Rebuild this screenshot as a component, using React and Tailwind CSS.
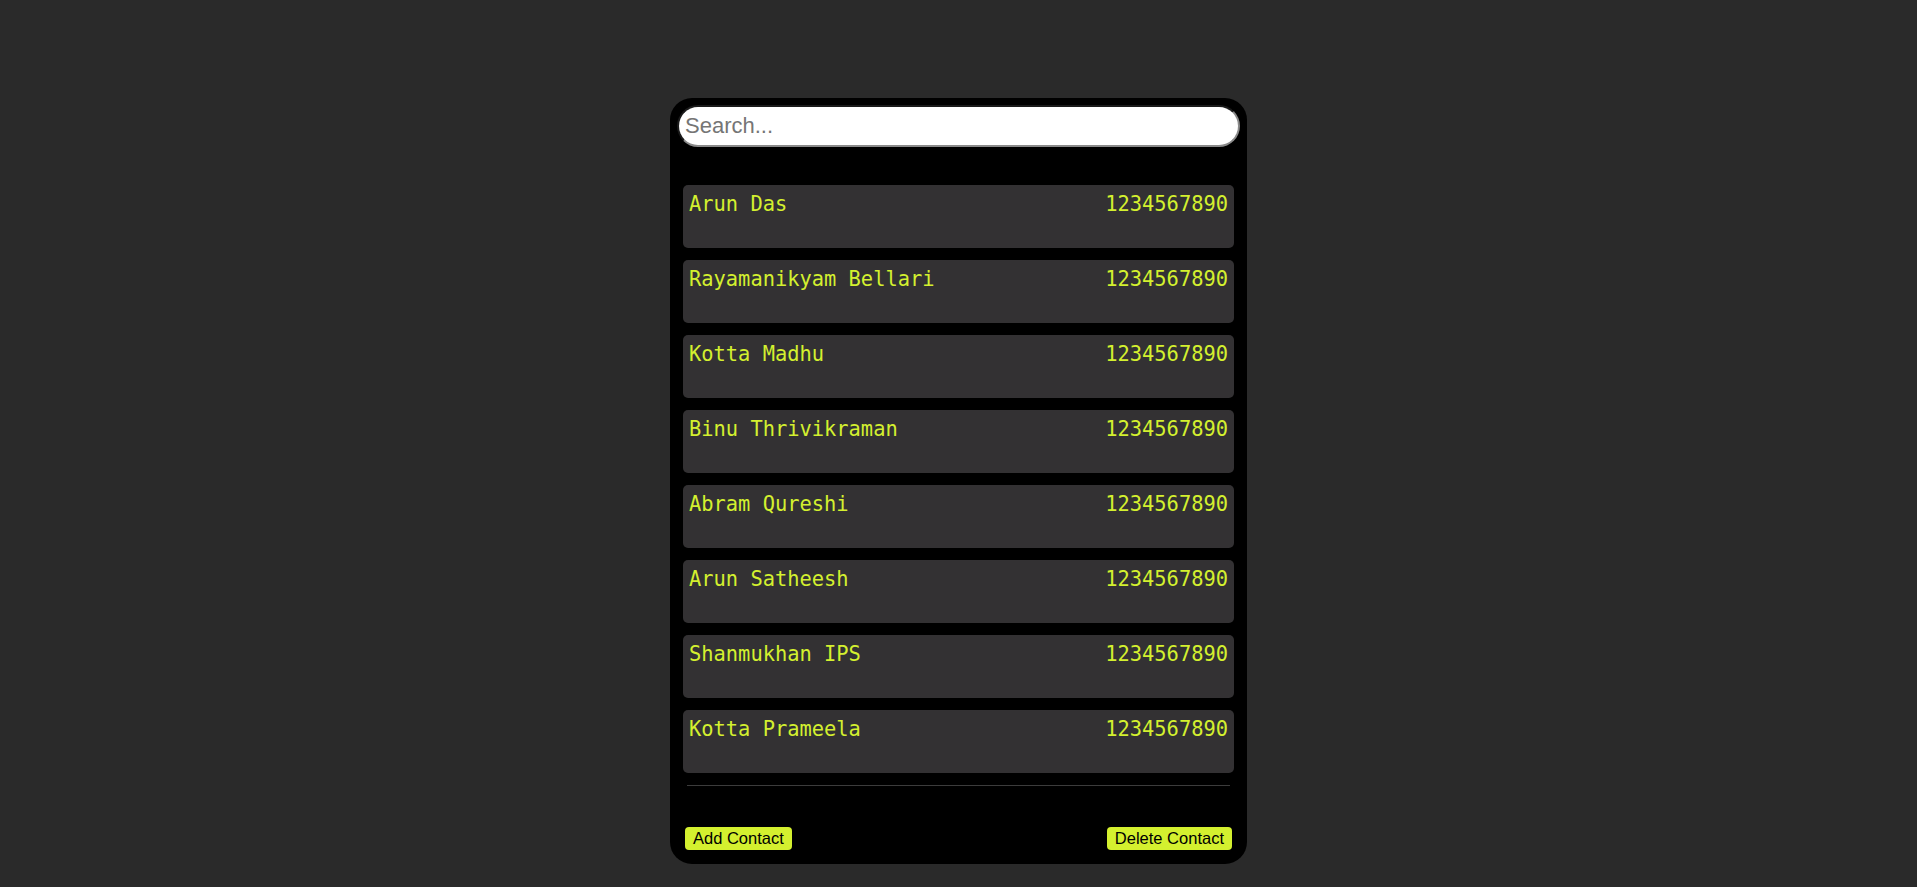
import { useState } from "react";

const contacts = [
  { name: "Arun Das", phone: "1234567890" },
  { name: "Rayamanikyam Bellari", phone: "1234567890" },
  { name: "Kotta Madhu", phone: "1234567890" },
  { name: "Binu Thrivikraman", phone: "1234567890" },
  { name: "Abram Qureshi", phone: "1234567890" },
  { name: "Arun Satheesh", phone: "1234567890" },
  { name: "Shanmukhan IPS", phone: "1234567890" },
  { name: "Kotta Prameela", phone: "1234567890" },
];

export default function App() {
  const [query, setQuery] = useState("");

  const filtered = contacts.filter((c) =>
    c.name.toLowerCase().includes(query.toLowerCase())
  );

  return (
    <div className="min-h-screen bg-[#2a2a2a] pt-[98px] font-['Liberation_Sans',Arial,sans-serif]">
      <div className="mx-auto w-[577px] h-[766px] bg-black rounded-[22px] px-[7px] pt-[7px] pb-[14px] flex flex-col">
        {/* Search */}
        <input
          type="text"
          value={query}
          onChange={(e) => setQuery(e.target.value)}
          placeholder="Search..."
          className="w-full h-[42px] rounded-full bg-white px-[6px] text-[22px] text-black placeholder:text-[#757575] border-2 border-t-[#1a1a1a] border-l-[#1a1a1a] border-r-[#8a8a8a] border-b-[#8a8a8a] outline-none"
        />

        {/* Contact list */}
        <div className="mt-[38px] px-[6px] flex flex-col gap-[12px]">
          {filtered.map((c) => (
            <div
              key={c.name}
              className="h-[63px] bg-[#333133] rounded-[5px] px-[6px] pt-[8px] flex justify-between items-start text-[#d4f02f] text-[20.4px] leading-[23px] font-['DejaVu_Sans_Mono',monospace]"
            >
              <span>{c.name}</span>
              <span>{c.phone}</span>
            </div>
          ))}
        </div>

        <div className="mt-[12px] mx-[10px] h-px bg-[#3c3c3c]" />

        {/* Actions */}
        <div className="mt-auto px-[8px] flex justify-between">
          <button className="h-[23px] px-[8px] rounded-[4px] bg-[#d4f02f] text-black text-[16.5px] leading-none">
            Add Contact
          </button>
          <button className="h-[23px] px-[8px] rounded-[4px] bg-[#d4f02f] text-black text-[16.5px] leading-none">
            Delete Contact
          </button>
        </div>
      </div>
    </div>
  );
}
